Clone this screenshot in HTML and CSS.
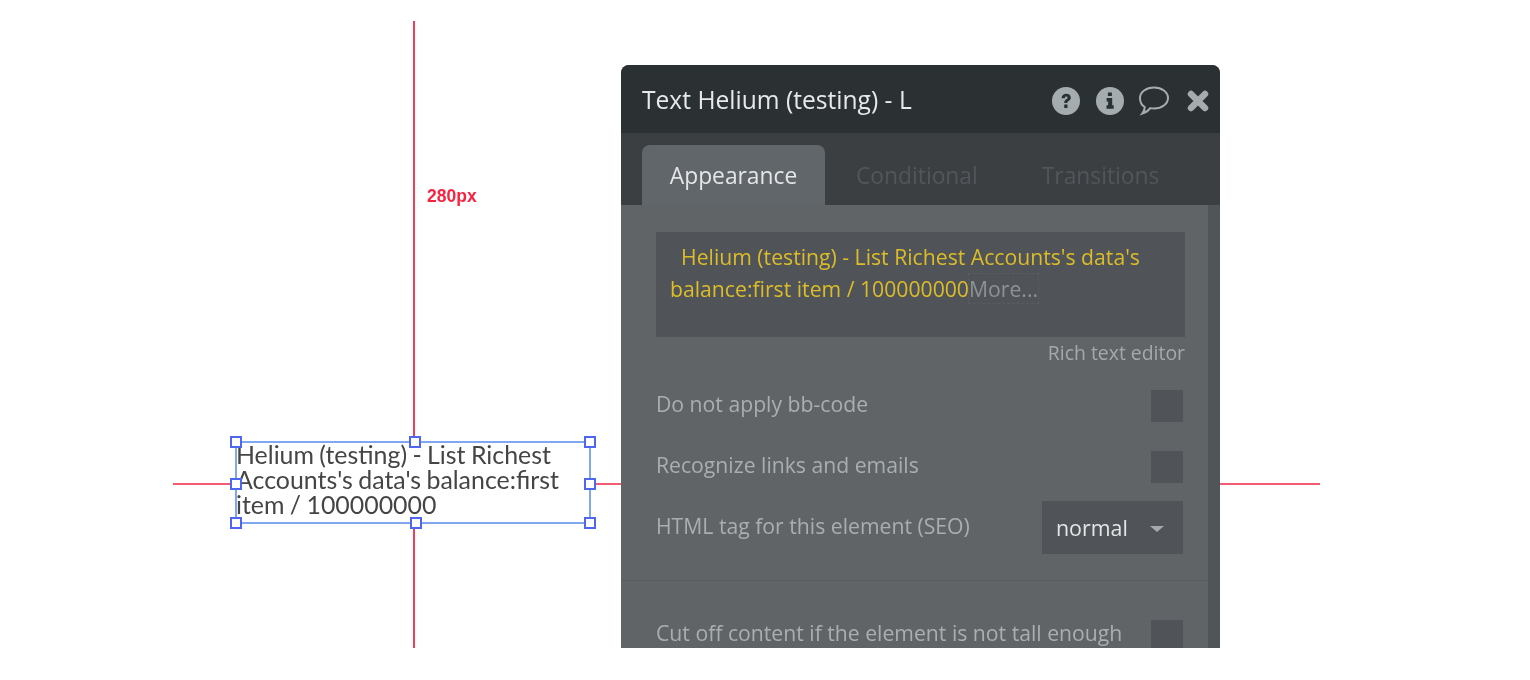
FILE: index.html
```html
<!DOCTYPE html>
<html lang="en">
<head>
<meta charset="utf-8">
<title>Text Helium (testing) - L</title>
<link rel="stylesheet" href="styles.css">
</head>
<body>
<main class="stage">
  <div class="guide guide-top"></div>
  <div class="guide guide-bottom"></div>
  <div class="guide guide-left"></div>
  <div class="guide guide-right"></div>
  <div class="measure">280px</div>

  <div class="selection">
    <p class="selection-text">Helium (testing) - List Richest Accounts's data's balance:first item / 100000000</p>
    <span class="handle h-tl"></span>
    <span class="handle h-tc"></span>
    <span class="handle h-tr"></span>
    <span class="handle h-ml"></span>
    <span class="handle h-mr"></span>
    <span class="handle h-bl"></span>
    <span class="handle h-bc"></span>
    <span class="handle h-br"></span>
  </div>

  <section class="panel">
    <header class="panel-head">
      <h1 class="panel-title">Text Helium (testing) - L</h1>
      <div class="panel-icons">
        <svg class="icon" width="28" height="28" viewBox="0 0 28 28"><circle cx="14" cy="14" r="14" fill="#a5acaf"/><path d="M9.600 11.200c0-2.700 2-4.400 4.700-4.400 2.600 0 4.500 1.500 4.500 3.800 0 1.800-1 2.700-2.200 3.500-.9.600-1.200 1-1.200 1.900h-3.200c0-1.900.6-2.800 1.900-3.700.9-.6 1.400-1 1.400-1.600 0-.7-.6-1.200-1.300-1.200-.8 0-1.300.6-1.400 1.700zM12.200 17.600h3.300v3.300h-3.300z" fill="#2b3133"/></svg>
        <svg class="icon icon-info" width="28" height="28" viewBox="0 0 28 28"><circle cx="14" cy="14" r="14" fill="#a5acaf"/><path d="M11.900 5.600h4v3.400h-4zM10.600 11h5.600v7.200h1.500v3.500h-7.200v-3.500h1.600v-3.700h-1.500z" fill="#2b3133"/></svg>
        <svg class="icon icon-chat" width="32" height="30" viewBox="0 0 32 30"><path d="M17 1.500c7.700 0 14 4.600 14 10.500s-6.300 10.500-14 10.500c-1.300 0-2.500-.1-3.700-.4-1.600 2.300-4.600 4.300-8 5.400 1.400-1.800 2.300-3.800 2.500-6.300C4.600 19.300 3 15.900 3 12 3 6.100 9.300 1.500 17 1.500z" fill="none" stroke="#a5acaf" stroke-width="2"/></svg>
        <svg class="icon icon-close" width="22" height="22" viewBox="0 0 22 22"><path d="M4 4l14 14M18 4L4 18" stroke="#a5acaf" stroke-width="6.500" stroke-linecap="round"/></svg>
      </div>
    </header>

    <nav class="tabs">
      <span class="tab tab-active">Appearance</span>
      <span class="tab tab-conditional">Conditional</span>
      <span class="tab tab-transitions">Transitions</span>
    </nav>

    <div class="panel-body">
      <div class="editor">
        <p class="editor-text"><span class="dyn">&nbsp;&nbsp;Helium (testing) - List Richest Accounts's data's balance:first item / 100000000</span><span class="more">More...</span></p>
      </div>
      <div class="rte-link">Rich text editor</div>

      <div class="row row-bb"><span class="label">Do not apply bb-code</span><span class="check"></span></div>
      <div class="row row-links"><span class="label">Recognize links and emails</span><span class="check"></span></div>
      <div class="row row-tag">
        <span class="label">HTML tag for this element (SEO)</span>
        <span class="select"><span class="select-value">normal</span><span class="caret"></span></span>
      </div>
      <hr class="divider">
      <div class="row row-cut"><span class="label">Cut off content if the element is not tall enough</span><span class="check"></span></div>
    </div>
  </section>
</main>
</body>
</html>
```

FILE: styles.css
```css
* { box-sizing: border-box; }

html, body {
  margin: 0;
  height: 680px;
  background: #fff;
  overflow: hidden;
}

.stage {
  position: relative;
  width: 1530px;
  height: 648px;
  overflow: hidden;
  background: #fff;
  filter: blur(0.6px);
}

.guide {
  position: absolute;
}
.guide-top { left: 413px; top: 21px; width: 2px; height: 420px; background: #ef3d56; }
.guide-bottom { left: 413px; top: 523px; width: 2px; height: 125px; background: #ef3d56; }
.guide-left { left: 173px; top: 483px; width: 63px; height: 2px; background: #f45a72; }
.guide-right { left: 590px; top: 483px; width: 730px; height: 2px; background: #f45a72; }

.measure {
  position: absolute;
  left: 427px;
  top: 186px;
  font: bold 17.5px/20px "Liberation Sans", sans-serif;
  color: #fb2140;
}

.selection {
  position: absolute;
  left: 235px;
  top: 441px;
  width: 356px;
  height: 83px;
  border: 2px solid #7fa8f0;
}
.selection-text {
  margin: -1px 0 0 -1px;
  font: 24.9px/25px Lato, sans-serif;
  word-spacing: -1px;
  color: #454545;
}
.handle {
  position: absolute;
  width: 12px;
  height: 12px;
  background: #fff;
  border: 2px solid #4f66f0;
}
.h-tl { left: -7px; top: -7px; }
.h-tc { left: 172px; top: -7px; }
.h-tr { left: 347px; top: -7px; }
.h-ml { left: -7px; top: 35px; }
.h-mr { left: 347px; top: 35px; }
.h-bl { left: -7px; top: 74px; }
.h-bc { left: 173px; top: 74px; }
.h-br { left: 347px; top: 74px; }

.panel {
  position: absolute;
  left: 621px;
  top: 65px;
  width: 599px;
  height: 600px;
  border-radius: 8px 8px 0 0;
  overflow: hidden;
  font-family: "Open Sans", sans-serif;
  background: #606467;
}

.panel-head {
  height: 68px;
  display: flex;
  align-items: center;
  justify-content: space-between;
  padding: 0 12px 0 21px;
  background: #2b3133;
}
.panel-title {
  margin: 0;
  font-size: 24.6px;
  font-weight: 400;
  color: #e6e8e9;
}
.panel-icons {
  display: flex;
  align-items: center;
  padding-top: 4px;
}
.icon { display: block; }
.icon-info { margin-left: 16px; }
.icon-chat { margin-left: 13px; }
.icon-close { margin-left: 18px; margin-right: -1px; }

.tabs {
  height: 72px;
  display: flex;
  align-items: flex-end;
  padding-left: 21px;
  background: #3b3f42;
}
.tab {
  height: 60px;
  padding-top: 15px;
  font-size: 22.8px;
  line-height: 32px;
  color: #51565a;
}
.tab-active {
  width: 183px;
  text-align: center;
  border-radius: 8px 8px 0 0;
  background: #60666a;
  color: #e4e6e7;
}
.tab-conditional { margin-left: 31px; }
.tab-transitions { margin-left: 64px; }

.panel-body {
  height: 460px;
  padding: 27px 35px 0;
  border-right: 12px solid #505558;
}

.editor {
  width: 529px;
  height: 105px;
  padding: 9px 14px 0;
  background: #505458;
  margin-right: -25px;
}
.editor-text {
  margin: 0;
  font-size: 21.2px;
  line-height: 32px;
  color: #dcbc28;
}
.more {
  color: #8d9295;
  outline: 1px dashed #585d60;
}

.rte-link {
  width: 529px;
  margin-top: 4px;
  text-align: right;
  font-size: 19.4px;
  line-height: 24px;
  color: #a4a9ab;
}

.row {
  width: 527px;
  display: flex;
  justify-content: space-between;
  align-items: center;
}
.label {
  font-size: 21.2px;
  color: #a9aeb1;
}
.check {
  width: 32px;
  height: 32px;
  background: #505458;
}
.row-bb { margin-top: 25px; height: 32px; }
.row-bb .label { margin-top: -6px; }
.row-links { margin-top: 29px; height: 32px; }
.row-links .label { margin-top: -6px; }
.row-tag { margin-top: 18px; height: 53px; }
.row-tag .label { margin-top: -5px; }
.row-cut { margin-top: 39px; height: 32px; }
.row-cut .label { margin-top: -8px; }

.select {
  width: 141px;
  height: 53px;
  display: flex;
  align-items: center;
  padding-left: 14px;
  background: #505458;
}
.select-value {
  font-size: 21.4px;
  margin-top: -1px;
  color: #e4e6e7;
}
.caret {
  margin-left: 22px;
  margin-top: 3px;
  width: 0;
  height: 0;
  border-left: 7px solid transparent;
  border-right: 7px solid transparent;
  border-top: 6px solid #a4a9ab;
}

.divider {
  margin: 26px -35px 0;
  height: 1px;
  border: 0;
  background: #575c5f;
}
```
